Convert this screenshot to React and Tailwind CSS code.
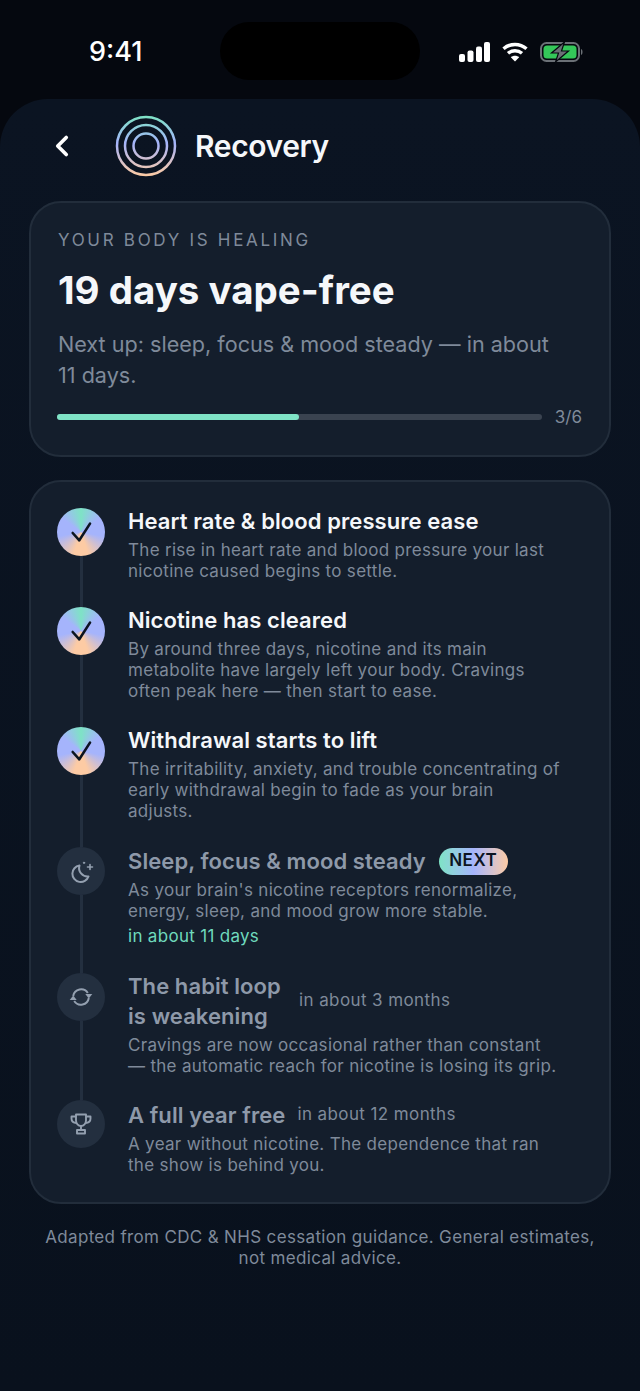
import React from 'react';
import { ChevronLeft } from 'lucide-react';

const MoonIcon = () => (
  <svg width="28" height="28" viewBox="0 0 28 28" fill="none" stroke="#94a0b0" strokeWidth="2" strokeLinecap="round" strokeLinejoin="round">
    <path d="M12.5 8.5 A8.3 8.3 0 1 0 21.5 19.5 A8.5 8.5 0 0 1 12.5 8.5 Z" />
    <path d="M23 7.5v5 M20.5 10h5" strokeWidth="1.6" />
    <circle cx="17" cy="5.8" r="0.7" fill="#94a0b0" strokeWidth="1" />
  </svg>
);

const LoopIcon = () => (
  <svg width="24" height="24" viewBox="0 0 24 24" fill="none" stroke="#94a0b0" strokeWidth="2">
    <path d="M4.2 11 A8 8 0 0 1 18.8 8" />
    <path d="M19.8 13 A8 8 0 0 1 5.2 16" />
    <path d="M16.3 9 H23.3 L19.8 13.6 Z" fill="#94a0b0" stroke="none" />
    <path d="M0.7 15 H7.7 L4.2 10.4 Z" fill="#94a0b0" stroke="none" />
  </svg>
);

const TrophyIcon = () => (
  <svg width="24" height="24" viewBox="0 0 24 24" fill="none" stroke="#94a0b0" strokeWidth="1.9" strokeLinejoin="round">
    <path d="M7 2.5 H17 V8.5 A5 5.5 0 0 1 7 8.5 Z" />
    <path d="M7 4.5 H2.5 V6.5 C2.5 9 4.5 10.8 7.6 11" />
    <path d="M17 4.5 H21.5 V6.5 C21.5 9 19.5 10.8 16.4 11" />
    <path d="M12 14 V18" />
    <rect x="8" y="18" width="8" height="3.5" />
  </svg>
);

const milestones = [
  {
    title: 'Heart rate & blood pressure ease',
    desc: ['The rise in heart rate and blood pressure your last', 'nicotine caused begins to settle.'],
    done: true,
    titleTop: '-mt-[2px]',
    descTop: 'mt-[3.5px]',
    bottom: 'pb-[25.5px]',
  },
  {
    title: 'Nicotine has cleared',
    desc: ['By around three days, nicotine and its main', 'metabolite have largely left your body. Cravings', 'often peak here — then start to ease.'],
    done: true,
    titleTop: '-mt-[2px]',
    descTop: 'mt-[3.5px]',
    bottom: 'pb-[25.5px]',
  },
  {
    title: 'Withdrawal starts to lift',
    desc: ['The irritability, anxiety, and trouble concentrating of', 'early withdrawal begin to fade as your brain', 'adjusts.'],
    done: true,
    titleTop: '-mt-[2px]',
    descTop: 'mt-[3.5px]',
    bottom: 'pb-[25.5px]',
  },
  {
    title: 'Sleep, focus & mood steady',
    desc: ["As your brain's nicotine receptors renormalize,", 'energy, sleep, and mood grow more stable.'],
    icon: MoonIcon,
    next: true,
    eta: 'in about 11 days',
    titleTop: '-mt-[1px]',
    descTop: 'mt-[3.5px]',
    bottom: 'pb-[24.5px]',
  },
  {
    title: 'The habit loop is weakening',
    desc: ['Cravings are now occasional rather than constant', '— the automatic reach for nicotine is losing its grip.'],
    icon: LoopIcon,
    when: 'in about 3 months',
    narrow: true,
    titleTop: '-mt-[2px]',
    descTop: 'mt-[3.5px]',
    bottom: 'pb-[23.5px]',
  },
  {
    title: 'A full year free',
    desc: ['A year without nicotine. The dependence that ran', 'the show is behind you.'],
    icon: TrophyIcon,
    when: 'in about 12 months',
    titleTop: 'mt-0',
    descTop: 'mt-[3.5px]',
    bottom: 'pb-0',
  },
];

const RingLogo = () => (
  <svg width="62" height="62" viewBox="0 0 62 62" fill="none">
    <defs>
      <linearGradient id="ring" x1="0" y1="1" x2="0" y2="61" gradientUnits="userSpaceOnUse">
        <stop offset="0" stopColor="#7ee3c5" />
        <stop offset="0.45" stopColor="#a5b4fc" />
        <stop offset="1" stopColor="#fdcba4" />
      </linearGradient>
    </defs>
    <circle cx="31" cy="31" r="29" stroke="url(#ring)" strokeWidth="2.5" />
    <circle cx="31" cy="31" r="21" stroke="url(#ring)" strokeWidth="2.5" />
    <circle cx="31" cy="31" r="12.5" stroke="url(#ring)" strokeWidth="2.5" />
  </svg>
);

const StatusIcons = () => (
  <div className="flex items-center gap-[12px]">
    <svg width="31" height="20" viewBox="0 0 31 20" fill="#fff">
      <rect x="0" y="12" width="6" height="8" rx="2" />
      <rect x="8.5" y="8.5" width="6" height="11.5" rx="2" />
      <rect x="17" y="4.5" width="6" height="15.5" rx="2" />
      <rect x="25" y="0" width="6" height="20" rx="2" />
    </svg>
    <svg width="26" height="20" viewBox="0 0 26 20" fill="none" stroke="#fff" strokeWidth="3.4">
      <path d="M1.5 6.8 C8 1 18 1 24.5 6.8" />
      <path d="M6 11.3 C10 7.8 16 7.8 20 11.3" />
      <path d="M13 19.5 L8.8 15.2 C11 13.2 15 13.2 17.2 15.2 Z" fill="#fff" stroke="none" />
    </svg>
    <svg width="43" height="20" viewBox="0 0 43 20" fill="none">
      <rect x="1" y="1" width="38" height="18" rx="5.5" stroke="#6b7076" strokeWidth="2" />
      <rect x="3.5" y="3.5" width="33" height="13" rx="3.5" fill="#34c759" />
      <path d="M41 7 C43 7.6 43 12.4 41 13 Z" fill="#6b7076" />
      <path d="M24.5 0 L11.5 11 H18.5 L15.5 20 L28.5 9 H21.5 Z" fill="#6b7076" stroke="#05080f" strokeWidth="1.2" />
    </svg>
  </div>
);

const Milestone = ({ item, last }) => {
  const Icon = item.icon;
  return (
    <div className="flex gap-[23px]">
      <div className="flex flex-col items-center w-12 shrink-0">
        {item.done ? (
          <div className="w-12 h-12 rounded-full flex items-center justify-center bg-[conic-gradient(#7ee3c5,#a5b4fc_15%,#a5b4fc_28%,#fdcba4_45%,#fdcba4_55%,#a5b4fc_72%,#a5b4fc_85%,#7ee3c5)]">
            <svg width="24" height="24" viewBox="0 0 24 24" fill="none" stroke="#0c1420" strokeWidth="2.6" strokeLinecap="round" strokeLinejoin="round">
              <path d="M3.7 13 L10.3 20.3 L21 3.6" />
            </svg>
          </div>
        ) : (
          <div className="w-12 h-12 rounded-full flex items-center justify-center bg-[#232f3f]">
            <Icon />
          </div>
        )}
        {!last && <div className="w-[3px] flex-1 bg-[#232f3f]" />}
      </div>
      <div className={`flex-1 ${item.bottom}`}>
        <div className={`flex items-center ${item.titleTop}`}>
          <div className={`text-[22px] leading-[30px] font-semibold tracking-[0.08px] ${item.done ? 'text-[#f5f7fa]' : 'text-[#8e99a9]'} ${item.narrow ? 'w-[158px]' : ''}`}>
            {item.title}
          </div>
          {item.next && (
            <span className="ml-[13px] h-[27px] px-[10.5px] rounded-full flex items-center text-[17px] font-semibold tracking-[0.5px] text-[#0c1420] bg-gradient-to-r from-[#7ee3c5] via-[#a5b4fc] to-[#fdcba4]">
              NEXT
            </span>
          )}
          {item.when && <span className={`${item.narrow ? 'ml-[13px]' : 'ml-[12px]'} text-[17px] tracking-[0.4px] text-[#7f8a9a]`}>{item.when}</span>}
        </div>
        <p className={`${item.descTop} text-[17px] leading-[21px] tracking-[0.3px] text-[#7f8a9a]`}>
          {item.desc.map(line => (
            <span key={line} className="block whitespace-nowrap">{line}</span>
          ))}
        </p>
        {item.eta && <p className="mt-[4px] mb-[2px] text-[17px] leading-[21px] tracking-[0.3px] text-[#6fd9bd]">{item.eta}</p>}
      </div>
    </div>
  );
};

const App = () => {
  return (
    <div className="w-[640px] h-[1391px] overflow-hidden bg-[#05080f] font-['Inter',sans-serif]">
      <div className="h-[99px] grid grid-cols-[1fr_200px_1fr] items-start">
        <span className="mt-[36px] pl-[89px] text-[27px] leading-[32px] font-medium text-white">9:41</span>
        <div className="mt-[22px] h-[58px] rounded-full bg-black" />
        <div className="mt-[42px] flex justify-end pr-[57px]"><StatusIcons /></div>
      </div>

      <div className="h-[1292px] rounded-t-[48px] bg-gradient-to-b from-[#0b1422] to-[#09111d] px-[29px]">
        <div className="flex items-center h-[102px] pb-[8px]">
          <ChevronLeft size={34} strokeWidth={2.6} color="#fff" className="ml-[16px]" />
          <div className="ml-[36px]"><RingLogo /></div>
          <h1 className="ml-[18px] text-[30px] font-semibold tracking-[-0.4px] text-[#f5f7fa]">Recovery</h1>
        </div>

        <section className="h-[256px] rounded-[32px] border-2 border-[#222d3b] bg-[#141e2c] px-[27px] pt-[26px]">
          <div className="text-[17px] leading-[22px] tracking-[2.7px] text-[#7f8a9a]">YOUR BODY IS HEALING</div>
          <div className="mt-[16px] text-[38.5px] leading-[46px] font-bold text-[#f5f7fa]">19 days vape-free</div>
          <p className="mt-[16px] text-[21.6px] leading-[31px] text-[#7f8a9a]">
            Next up: sleep, focus &amp; mood steady — in about
            <br />
            11 days.
          </p>
          <div className="mt-[14px] flex items-center gap-[13px]">
            <div className="flex-1 h-[6px] -ml-[1px] mb-[2px] rounded-full bg-[#3a4350]">
              <div className="w-1/2 h-full rounded-full bg-[#7fe3c6]" />
            </div>
            <span className="text-[17px] text-[#7f8a9a]">3/6</span>
          </div>
        </section>

        <section className="mt-[23px] h-[724px] rounded-[32px] border-2 border-[#222d3b] bg-[#141e2c] px-[26px] pt-[26px]">
          {milestones.map((item, i) => (
            <Milestone key={item.title} item={item} last={i === milestones.length - 1} />
          ))}
        </section>

        <p className="mt-[23px] text-center text-[17px] leading-[21px] tracking-[0.34px] text-[#7f8a9a]">
          Adapted from CDC &amp; NHS cessation guidance. General estimates,
          <br />
          not medical advice.
        </p>
      </div>
    </div>
  );
};

export default App;
